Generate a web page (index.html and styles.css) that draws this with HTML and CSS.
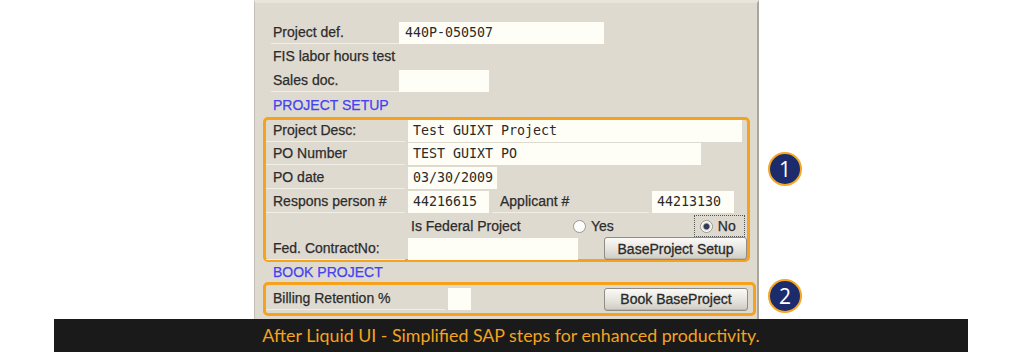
FILE: index.html
```html
<!DOCTYPE html>
<html lang="en">
<head>
    <meta charset="UTF-8">
    <title>After Liquid UI - Project Setup</title>
    <link rel="stylesheet" href="styles.css">
</head>
<body>
<div class="stage">
    <div class="panel">
        <div class="row">
            <span class="lbl">Project def.</span>
            <span class="field w-def">440P-050507</span>
        </div>
        <div class="row">
            <span class="lbl plain">FIS labor hours test</span>
        </div>
        <div class="row">
            <span class="lbl">Sales doc.</span>
            <span class="field w-sales"></span>
        </div>
        <div class="row">
            <span class="heading">PROJECT SETUP</span>
        </div>

        <div class="box box-setup">
            <div class="row">
                <span class="lbl">Project Desc:</span>
                <span class="field w-desc">Test GUIXT Project</span>
            </div>
            <div class="row">
                <span class="lbl">PO Number</span>
                <span class="field w-po">TEST GUIXT PO</span>
            </div>
            <div class="row">
                <span class="lbl">PO date</span>
                <span class="field w-date">03/30/2009</span>
            </div>
            <div class="row">
                <span class="lbl">Respons person #</span>
                <span class="field w-resp">44216615</span>
                <span class="lbl lbl-app">Applicant #</span>
                <span class="field w-app">44213130</span>
            </div>
            <div class="row">
                <span class="spacer"></span>
                <span class="question">Is Federal Project</span>
                <span class="radio"><span class="dot"></span>Yes</span>
                <span class="radio focused"><span class="dot checked"></span>No</span>
            </div>
            <div class="row row-last">
                <span class="lbl">Fed. ContractNo:</span>
                <span class="field w-fed"></span>
                <button class="btn">BaseProject Setup</button>
            </div>
        </div>

        <div class="row row-book">
            <span class="heading">BOOK PROJECT</span>
        </div>

        <div class="box box-book">
            <div class="row">
                <span class="lbl lbl-bill">Billing Retention %</span>
                <span class="field w-bill"></span>
                <button class="btn">Book BaseProject</button>
            </div>
        </div>
    </div>

    <!-- numbered callouts beside the panel -->
    <div class="callout callout-1">1</div>
    <div class="callout callout-2">2</div>
</div>

<div class="caption">After Liquid UI - Simplified SAP steps for enhanced productivity.</div>
</body>
</html>
```

FILE: styles.css
```css
body {
    margin: 0;
    background: #ffffff;
    font-family: "Liberation Sans", Arial, sans-serif;
    font-size: 14px;
    color: #2c2c2c;
}
.stage {
    position: relative;
    height: 319px;
}
.panel {
    box-sizing: border-box;
    margin-left: 254px;
    width: 505px;
    height: 319px;
    padding: 18px 0 0 8px;
    background: #dfdad0;
    border-left: 1px solid #c3bfb5;
    border-right: 2px solid #aaa69d;
    border-top: 3px solid #e8e5dd;
    -webkit-text-stroke: 0.25px currentColor;
}
.row {
    display: flex;
    align-items: center;
    height: 24px;
}
.panel > .row {
    margin-left: 8px;
}
.lbl {
    box-sizing: border-box;
    width: 128px;
    height: 22px;
    line-height: 21px;
    padding-left: 2px;
    border-bottom: 1px solid #f1eee8;
    white-space: nowrap;
}
.lbl.plain {
    border-bottom: none;
    width: auto;
}
.heading {
    color: #4343f2;
    padding-left: 2px;
}
.field {
    box-sizing: border-box;
    height: 22px;
    line-height: 22px;
    padding-left: 6px;
    background: #fffef6;
    font-family: "DejaVu Sans Mono", "Liberation Mono", monospace;
    font-size: 13.3px;
    color: #2a2a2a;
    white-space: pre;
    -webkit-text-stroke: 0;
}
.w-def { width: 205px; }
.w-sales { width: 90px; }

.box {
    box-sizing: border-box;
    border: 3px solid #f6a21c;
    border-radius: 5px;
}
.box .lbl {
    width: 139px;
    padding-left: 7px;
    margin-right: 3px;
}
.box-setup {
    width: 487px;
}
.box-setup .row:first-child {
    height: 22px;
}
.box-setup .row-last {
    height: 21px;
}
.w-desc { width: 334px; padding-left: 5px; }
.w-po { width: 293px; padding-left: 5px; }
.w-date { width: 89px; padding-left: 5px; }
.w-resp { width: 81px; padding-left: 5px; }
.w-app { width: 82px; padding-left: 5px; }
.w-fed { width: 170px; }
.w-bill { width: 23px; }
.box .lbl-app {
    width: 157px;
    margin-left: 3px;
    padding-left: 8px;
}
.spacer {
    width: 145px;
}
.question {
    width: 162px;
}
.radio {
    display: flex;
    align-items: center;
    gap: 5px;
}
.radio.focused {
    box-sizing: border-box;
    height: 22px;
    margin-left: 80px;
    padding: 0 8px 0 5px;
    border: 1px dotted #555;
}
.dot {
    box-sizing: border-box;
    width: 13px;
    height: 13px;
    border-radius: 50%;
    border: 1px solid #9b978f;
    background: #ffffff;
}
.dot.checked {
    background: radial-gradient(circle, #333a55 0 2.5px, #d9d6cf 3.5px, #ffffff 5px);
}
.btn {
    box-sizing: border-box;
    flex-shrink: 0;
    height: 23px;
    width: 143px;
    margin-left: 26px;
    padding: 0;
    border: 1px solid #8f8c86;
    border-radius: 3px;
    background: linear-gradient(#fbfaf7, #e6e3dd 55%, #cfccc5);
    font-family: "Liberation Sans", Arial, sans-serif;
    font-size: 14px;
    color: #2a2a2a;
    -webkit-text-stroke: 0.3px #2a2a2a;
    box-shadow: inset 0 -1px 0 #bdb9b1;
}
.row-book {
    height: 20px;
}
.box-book {
    width: 493px;
    height: 34px;
}
.box-book .row {
    height: 28px;
}
.box .lbl-bill {
    width: 179px;
}
.box-book .btn {
    width: 144px;
    margin-left: 133px;
}

.callout {
    position: absolute;
    left: 768px;
    width: 34px;
    height: 34px;
    box-sizing: border-box;
    border: 2px solid #f5a623;
    border-radius: 50%;
    background: #1c2b6c;
    color: #ffffff;
    font-family: "Open Sans", "Liberation Sans", sans-serif;
    font-size: 21px;
    line-height: 30px;
    text-align: center;
}
.callout-1 { top: 152px; }
.callout-2 { top: 279px; }

.caption {
    margin-left: 54px;
    width: 914px;
    height: 33px;
    line-height: 33px;
    background: #1a1a1a;
    color: #f4a31f;
    font-family: Lato, "Open Sans", sans-serif;
    font-size: 17.8px;
    text-align: center;
}
```
